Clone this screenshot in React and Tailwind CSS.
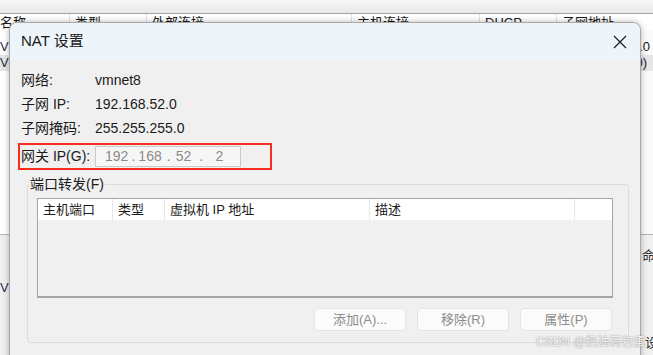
export default function App() {
  return (
    <div className="relative w-[653px] h-[355px] overflow-hidden bg-white text-[#1a1a1a] font-['Liberation_Sans','Noto_Sans_CJK_SC',sans-serif]">
      {/* background window */}
      <div className="flex flex-col h-full">
        <div className="h-[14px] shrink-0 bg-linear-to-b from-[#f6f6f6] to-[#e8e8e8] border-b border-[#a3a3a3]" />
        <div className="flex h-[17px] shrink-0 bg-white text-[13px] whitespace-nowrap">
          <div className="w-[70px] flex items-center border-r border-[#e3e3e3]">名称</div>
          <div className="w-[77px] flex items-center pl-[5px] border-r border-[#e3e3e3]">类型</div>
          <div className="w-[205px] flex items-center pl-[5px] border-r border-[#e3e3e3]">外部连接</div>
          <div className="w-[128px] flex items-center pl-[5px] border-r border-[#e3e3e3]">主机连接</div>
          <div className="w-[77px] flex items-center pl-[5px] border-r border-[#e3e3e3]">DHCP</div>
          <div className="flex-1 flex items-center pl-[5px]">子网地址</div>
        </div>
        <div className="flex flex-1">
          {/* left strip */}
          <div className="w-[9px] flex flex-col overflow-hidden text-[13px] whitespace-nowrap">
            <div className="h-[203px] flex flex-col pt-[8px] bg-white">
              <div className="h-[16px] flex items-center text-[#1f2f4f]">VMnet1</div>
              <div className="h-[16px] flex items-center bg-[#e6e6e6] text-[#1f2f4f]">VMnet8</div>
            </div>
            <div className="flex-1 border-t border-[#b4b4b4] bg-[#efefef] pt-[45px]">
              <div className="h-[16px] flex items-center text-[#1f2f4f]">VMnet</div>
            </div>
          </div>
          <div className="w-[632px]" />
          {/* right strip */}
          <div className="flex-1 flex flex-col overflow-hidden text-[13px] whitespace-nowrap">
            <div className="h-[203px] flex flex-col pt-[8px] bg-[#fafafa]">
              <div className="h-[16px] flex items-center justify-end pr-[3px]">192.168.213.0</div>
              <div className="h-[16px] flex items-center justify-end pr-[6px] bg-[#e6e6e6]">(0)</div>
            </div>
            <div className="flex-1 border-t border-[#b4b4b4] bg-[#f0f0f0] pt-[13px] pl-[1px] text-[#333]">
              <div className="h-[16px] flex items-center">命令</div>
              <div className="h-[71px]" />
              <div className="h-[16px] flex items-center pl-[3px]">设置</div>
            </div>
          </div>
        </div>
      </div>

      {/* NAT dialog */}
      <div className="absolute left-[9px] top-[22px] w-[632px] h-[345px] flex flex-col rounded-t-[8px] border border-[#a9a9a9] bg-[#f0f0f0] overflow-hidden shadow-[0_0_6px_rgba(0,0,0,0.28)]">
        <div className="h-[37px] shrink-0 flex items-center justify-between pl-[11px] pr-[13px] bg-[#eef5fa]">
          <span className="text-[15px]">NAT 设置</span>
          <svg width="14" height="14" viewBox="0 0 14 14">
            <path d="M1 1 L13 13 M13 1 L1 13" stroke="#1a1a1a" strokeWidth="1.15" fill="none" />
          </svg>
        </div>
        <div className="flex flex-col px-[11px] pt-[8px] text-[14px]">
          <div className="flex h-[24px] items-center">
            <span className="w-[74px]">网络:</span>
            <span>vmnet8</span>
          </div>
          <div className="flex h-[24px] items-center">
            <span className="w-[74px]">子网 IP:</span>
            <span>192.168.52.0</span>
          </div>
          <div className="flex h-[24px] items-center">
            <span className="w-[74px]">子网掩码:</span>
            <span>255.255.255.0</span>
          </div>
          <div className="mt-[3px] -ml-[3px] w-[254px] h-[27px] flex items-center pl-[1px] border-2 border-[#fa2c1e]">
            <span className="w-[74px]">网关 IP(G):</span>
            <div className="w-[146px] h-[21px] flex items-center border border-[#c9c9c9] bg-[#f6f6f6] text-[#8a8a8a] whitespace-nowrap">
              <span className="ml-[9px]">192</span>
              <span className="w-[10px] text-center">.</span>
              <span>168</span>
              <span className="w-[14px] text-center">.</span>
              <span>52</span>
              <span className="w-[20px] text-center">.</span>
              <span className="w-[16px] text-center">2</span>
            </div>
          </div>

          <div className="relative mt-[14px] ml-[6px] border border-[#dcdcdc] rounded-[3px] pt-[13px] pl-[9px] pr-[15px] pb-[11px]">
            <span className="absolute left-[1px] -top-[10px] px-[1px] bg-[#f0f0f0] leading-[18px]">端口转发(F)</span>
            <div className="h-[100px] flex flex-col border border-b-2 border-[#a5a5a5]">
              <div className="h-[21px] flex bg-white text-[13px] whitespace-nowrap">
                <div className="w-[75px] flex items-center pl-[5px] border-r border-[#e6e6e6]">主机端口</div>
                <div className="w-[52px] flex items-center pl-[5px] border-r border-[#e6e6e6]">类型</div>
                <div className="w-[205px] flex items-center pl-[5px] border-r border-[#e6e6e6]">虚拟机 IP 地址</div>
                <div className="w-[205px] flex items-center pl-[5px] border-r border-[#e6e6e6]">描述</div>
                <div className="flex-1" />
              </div>
            </div>
            <div className="mt-[10px] flex justify-end gap-[11px] pr-[1px] text-[13px] text-[#8c8c8c]">
              <div className="w-[92px] h-[23px] flex items-center justify-center rounded-[4px] border border-[#e4e4e4] bg-[#fbfbfb]">添加(A)...</div>
              <div className="w-[92px] h-[23px] flex items-center justify-center rounded-[4px] border border-[#e4e4e4] bg-[#fbfbfb]">移除(R)</div>
              <div className="w-[92px] h-[23px] flex items-center justify-center rounded-[4px] border border-[#e4e4e4] bg-[#fbfbfb]">属性(P)</div>
            </div>
          </div>
        </div>
      </div>

      {/* watermark */}
      <div className="absolute left-[536px] top-[333px] text-[12px] whitespace-nowrap text-[#f6f6f6] [text-shadow:0_0_1.5px_#6b6b6b]">
        CSDN @奶油荷包蛋
      </div>
    </div>
  );
}
